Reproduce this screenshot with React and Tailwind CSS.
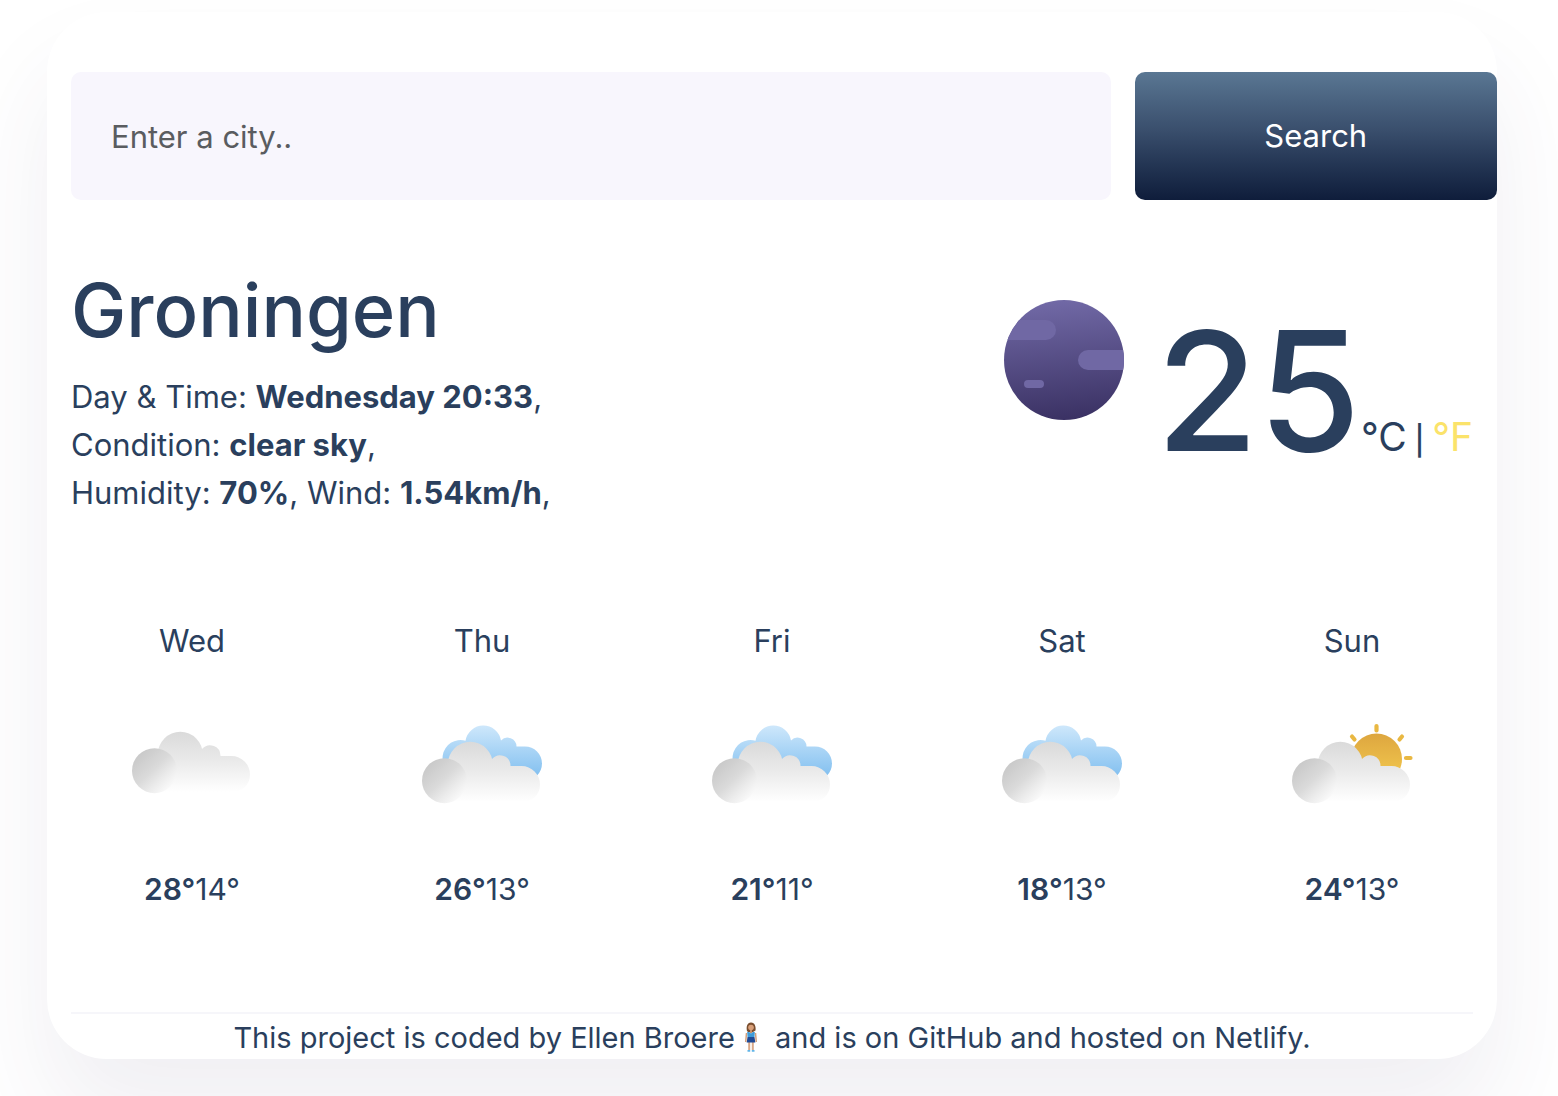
import React from "react";

const FORECAST = [
  { day: "Wed", max: 28, min: 14, icon: "cloud" },
  { day: "Thu", max: 26, min: 13, icon: "clouds" },
  { day: "Fri", max: 21, min: 11, icon: "clouds" },
  { day: "Sat", max: 18, min: 13, icon: "clouds" },
  { day: "Sun", max: 24, min: 13, icon: "sun" },
];

function SkyIcon({ kind, id }) {
  const body = `${id}-body`;
  const ball = `${id}-ball`;
  const blue = `${id}-blue`;
  const sun = `${id}-sun`;
  return (
    <svg viewBox="0 0 160 120" className="h-[120px] w-[160px]" aria-hidden="true">
      <defs>
        <linearGradient id={body} gradientUnits="userSpaceOnUse" x1="0" y1="32" x2="0" y2="92">
          <stop offset="0" stopColor="#dadada" />
          <stop offset="0.45" stopColor="#e9e9e9" />
          <stop offset="1" stopColor="#ffffff" />
        </linearGradient>
        <linearGradient id={ball} x1="0.1" y1="0.15" x2="0.85" y2="0.95">
          <stop offset="0" stopColor="#c8c8c8" />
          <stop offset="0.45" stopColor="#dadada" />
          <stop offset="0.7" stopColor="#ebebeb" />
          <stop offset="1" stopColor="#fdfdfd" />
        </linearGradient>
        <linearGradient id={blue} gradientUnits="userSpaceOnUse" x1="0" y1="26" x2="0" y2="80">
          <stop offset="0" stopColor="#cde7fb" />
          <stop offset="0.9" stopColor="#85c1f0" />
        </linearGradient>
        <linearGradient id={sun} x1="0" y1="0" x2="0" y2="1">
          <stop offset="0" stopColor="#dda63f" />
          <stop offset="0.9" stopColor="#f3c94f" />
        </linearGradient>
      </defs>
      {kind === "clouds" && (
        <path
          fill={`url(#${blue})`}
          d="M58 76A18 18 0 1 1 63.500 40.700A18 18 0 0 1 99 40.500A9 9 0 0 1 114.500 46.500H123A17 17 0 0 1 123 80.500H58Z"
        />
      )}
      {kind === "sun" && (
        <g>
          <circle cx="104.500" cy="59" r="25.500" fill={`url(#${sun})`} />
          <g strokeWidth="4.200" stroke="#e9b842" strokeLinecap="round">
            <path d="M104.500 26V30.500M134 58H138.500M80 36.500L82.500 39.500M130 36.500L127.500 39.500" />
          </g>
        </g>
      )}
      <g transform={kind === "cloud" ? "translate(0 0)" : "translate(0 10)"}>
        <g fill={`url(#${body})`}>
          <circle cx="68.300" cy="54.300" r="22.500" />
          <path d="M46 92L56 56L90.300 48.700A10.500 10.500 0 0 1 108.500 56H119.500A18.500 18.500 0 0 1 138 74.500C138 85 130 92 119 92Z" />
        </g>
        <circle cx="42.500" cy="70.700" r="22.500" fill={`url(#${ball})`} />
      </g>
    </svg>
  );
}

function NightIcon() {
  return (
    <svg viewBox="0 0 120 120" className="mt-[32px] h-[120px] w-[120px] shrink-0" role="img" aria-label="clear sky">
      <defs>
        <linearGradient id="night" x1="0.45" y1="0" x2="0.55" y2="1">
          <stop offset="0" stopColor="#7169a6" />
          <stop offset="1" stopColor="#3a3163" />
        </linearGradient>
        <clipPath id="night-clip">
          <circle cx="60" cy="60" r="60" />
        </clipPath>
      </defs>
      <g clipPath="url(#night-clip)">
        <rect width="120" height="120" fill="url(#night)" />
        <rect x="-20" y="20" width="72" height="20" rx="10" fill="#7068a4" />
        <rect x="74" y="50" width="70" height="20" rx="10" fill="#7068a4" />
        <rect x="20" y="80" width="20" height="8" rx="4" fill="#7068a4" />
      </g>
    </svg>
  );
}

function Person() {
  return (
    <svg viewBox="0 0 12 30" className="mx-[10px] inline-block h-[30px] w-[12px] align-[-4px]" role="img" aria-label="woman standing">
      <path d="M2 9C1 5 2 0.500 6 0.500S11 5 10.500 8.500L8 10H3Z" fill="#7a4e2e" />
      <circle cx="6" cy="5.500" r="2.800" fill="#d9a07a" />
      <path d="M5 8H7V11H5Z" fill="#c98f68" />
      <path d="M1.500 11L0.700 20M10.500 11L11.300 20" stroke="#d3a07c" strokeWidth="1.500" />
      <path d="M4.200 20V28M7.800 20V28" stroke="#d9a888" strokeWidth="2" />
      <path d="M2.200 10H4.200L6 11.500L7.800 10H9.800L9.500 15H2.500Z" fill="#3f9bd8" />
      <path d="M2.500 15H9.500L10.300 20.500H1.700Z" fill="#204a94" />
      <path d="M2.500 28H5.200V29.700H2.500ZM6.800 28H9.500V29.700H6.800Z" fill="#62b5e8" />
    </svg>
  );
}

export default function App() {
  return (
    <div className="min-h-screen overflow-hidden bg-white pt-3 pr-[61px] pb-[37px] pl-[47px] font-['Inter',sans-serif] text-[31px] leading-[48px] text-[#2a3f5d]">
      <main className="rounded-[60px] bg-white pt-[60px] shadow-[0_60px_100px_0_rgba(65,50,100,0.08)]">
        <form className="flex" onSubmit={(e) => e.preventDefault()}>
          <div className="w-3/4 px-6">
            <input
              type="search"
              aria-label="City"
              placeholder="Enter a city.."
              className="h-32 w-full rounded-[10px] bg-[#f8f6fd] px-10 outline-none placeholder:text-[#5a5c60]"
            />
          </div>
          <button
            type="submit"
            className="h-32 w-1/4 rounded-[10px] bg-linear-to-b from-[#5a7793] via-[#3a4f6d] via-45% to-[#0f1d3b] text-white"
          >
            Search
          </button>
        </form>

        <section className="flex items-start justify-between px-6 pt-[68px]">
          <div>
            <h1 className="text-[74px] leading-[84px] font-medium">Groningen</h1>
            <ul className="mt-[21px]">
              <li>Day &amp; Time: <strong>Wednesday 20:33</strong>,</li>
              <li>Condition: <strong>clear sky</strong>,</li>
              <li>Humidity: <strong>70%</strong>, Wind: <strong>1.54km/h</strong>,</li>
            </ul>
          </div>
          <div className="flex items-start gap-8">
            <NightIcon />
            <div className="flex items-baseline pt-[15px]">
              <span className="text-[166px] leading-[216px] font-[450]">25</span>
              <span className="text-[39px]">
                °C<span className="text-[29px] font-medium"> | </span>
                <a href="#fahrenheit" className="text-[#fbe36a]">°F</a>
              </span>
            </div>
          </div>
        </section>

        <section className="grid grid-cols-5 pt-[100px] text-center">
          {FORECAST.map((f) => (
            <div key={f.day} className="flex flex-col items-center">
              <div>{f.day}</div>
              <div className="pt-[35px] pb-[45px]">
                <SkyIcon kind={f.icon} id={f.day} />
              </div>
              <div className="text-[30px]">
                <strong className="font-semibold">{f.max}°</strong>
                {f.min}°
              </div>
            </div>
          ))}
        </section>

        <footer className="mx-6 mt-[99px] border-t-2 border-[#f6f6fa] pt-0.5 text-center text-[29px] leading-[43px]">
          This project is coded by <a href="#author">Ellen Broere</a>
          <Person /> and is on <a href="#github">GitHub</a> and hosted on <a href="#netlify">Netlify</a>.
        </footer>
      </main>
    </div>
  );
}
